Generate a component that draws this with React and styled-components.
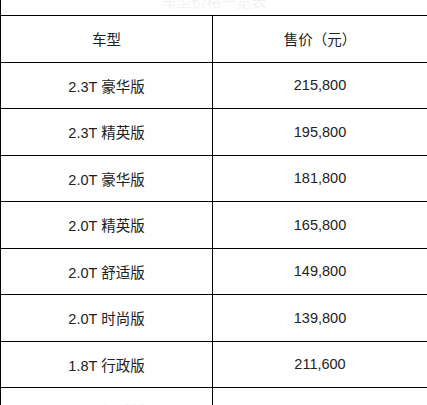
import React from 'react'
import styled, {createGlobalStyle} from 'styled-components'

const GlobalStyle = createGlobalStyle`
	html, body {
		margin: 0;
		padding: 0;
		background: #fff;
	}
	body {
		font-family: "Liberation Sans", "Noto Sans CJK SC", sans-serif;
	}
`

const Page = styled.div`
	width: 427px;
	height: 405px;
	overflow: hidden;
	background: #fff;
`
const Sheet = styled.div`
	margin-top: -24px;
	border-left: 1.5px solid #000;
`
const Title = styled.div`
	height: 39px;
	display: flex;
	align-items: flex-end;
	justify-content: center;
	border-bottom: 1px solid #000;
	font-size: 15px;
	line-height: 22px;
	color: #f2f2f2;
	padding-bottom: 2px;
	box-sizing: border-box;
	height: 40px;
`
const Row = styled.div`
	display: grid;
	grid-template-columns: 211px 1fr;
	height: 46.5px;
	box-sizing: border-box;
	border-bottom: 1px solid ${p => p.$last ? 'transparent' : '#000'};
`
const Cell = styled.div`
	display: flex;
	align-items: center;
	justify-content: center;
	font-size: 14.5px;
	color: ${p => p.$faint ? '#f6e6ea' : '#222'};
	& + & {
		border-left: 1px solid #000;
	}
`

const rows = [
	['2.3T 豪华版', '215,800'],
	['2.3T 精英版', '195,800'],
	['2.0T 豪华版', '181,800'],
	['2.0T 精英版', '165,800'],
	['2.0T 舒适版', '149,800'],
	['2.0T 时尚版', '139,800'],
	['1.8T 行政版', '211,600'],
]

export default function App() {
	return (
		<Page>
			<GlobalStyle/>
			<Sheet>
				<Title>车型价格一览表</Title>
				<Row>
					<Cell>车型</Cell>
					<Cell>售价（元）</Cell>
				</Row>
				{rows.map(([name, price]) => (
					<Row key={name}>
						<Cell>{name}</Cell>
						<Cell>{price}</Cell>
					</Row>
				))}
				<Row $last>
					<Cell $faint>1.8T 舒适版</Cell>
					<Cell $faint>189,800</Cell>
				</Row>
			</Sheet>
		</Page>
	)
}
